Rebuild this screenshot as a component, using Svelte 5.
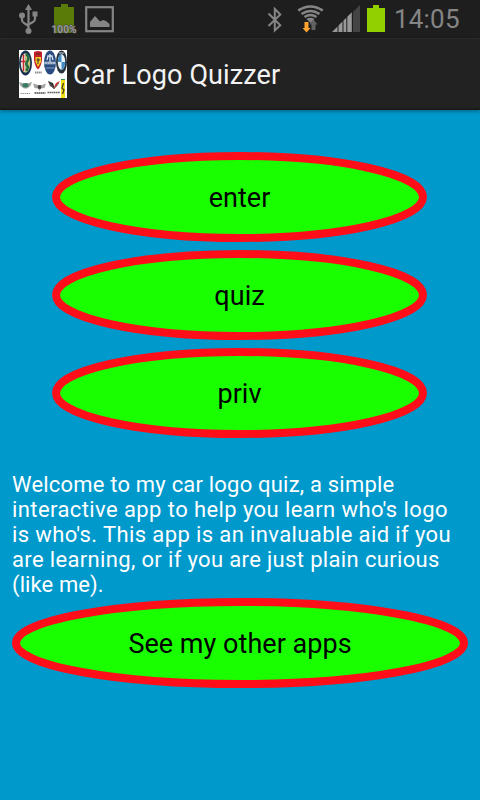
<script>
    const menu = ["enter", "quiz", "priv"];
    const lines = [
        {text: "Welcome to my car logo quiz, a simple", spacing: 0.2},
        {text: "interactive app to help you learn who's logo", spacing: 0.41},
        {text: "is who's. This app is an invaluable aid if you", spacing: 0.39},
        {text: "are learning, or if you are just plain curious", spacing: 0.35},
        {text: "(like me).", spacing: 0.1}
    ];
</script>

{#snippet oval(label)}
    <button>
        <svg class="ring"><ellipse cx="50%" cy="50%" /></svg>
        <span>{label}</span>
    </button>
{/snippet}

<div class="screen">
    <div class="statusBar">
        <svg class="notifications" width="130" height="38" viewBox="0 0 130 38">
            <!-- usb -->
            <g fill="none" stroke="#858585" stroke-width="2.2">
                <path d="M28.500 9V30M22 16V20Q22 22 24 23L28.500 26M35 15V19Q35 21 33 22L28.500 24.500" />
            </g>
            <g fill="#858585">
                <path d="M28.500 4L32 10H25Z" />
                <circle cx="22" cy="15.500" r="3" />
                <rect x="32.500" y="11.500" width="5" height="5" />
                <circle cx="28.500" cy="31" r="3" />
            </g>
            <!-- charge level -->
            <path d="M61 4H68V7H74V33H54V7H61Z" fill="#5b7b08" />
            <text x="64" y="33" text-anchor="middle" textLength="25" lengthAdjust="spacingAndGlyphs" class="level">100%</text>
            <!-- picture -->
            <rect x="86.200" y="7.200" width="26.600" height="24" fill="none" stroke="#858585" stroke-width="2.200" />
            <path d="M90 27V22L95 16L100 21.500L103 20L106 21L109.500 24V27Z" fill="#858585" />
        </svg>
        <svg class="system" width="136" height="38" viewBox="256 0 136 38">
            <path d="M268.500 13.500L280.300 25.200L274.800 30.500V9L280.300 14.500L268.500 26" fill="none" stroke="#858585" stroke-width="2" />
            <!-- wifi -->
            <g fill="none" stroke="#858585" stroke-width="2.700">
                <path d="M298.300 10.500Q310.500 2.500 322.700 10.500" />
                <path d="M301.500 14Q310.500 8 319.500 14" />
                <path d="M304.500 17Q310.500 13 316.500 17" />
            </g>
            <path d="M306.500 19Q310.500 16.500 314.500 19L310.500 23Z" fill="#858585" />
            <path d="M304.500 22H308.500V28H310.500L306.500 32.500L302.500 28H304.500Z" fill="#ffa431" />
            <path d="M311.500 30H315.500V24.500H317.500L313.500 19.500L309.500 24.500H311.500Z" fill="#626262" />
            <!-- signal -->
            <path d="M360 5V32H353V12Z" fill="#444" />
            <path d="M332 32L337.500 26.500V32ZM338.500 25.500L342.500 21.500V32H338.500ZM343.500 20.500L346.300 17.700V32H343.500ZM347.300 16.700L351.800 12.200V32H347.300Z" fill="#999" />
            <path d="M373 5H379V8H385V32H367V8H373Z" fill="#92d000" />
        </svg>
        <span class="clock">14:05</span>
    </div>

    <div class="actionBar">
        <svg class="appIcon" width="48" height="48" viewBox="0 0 48 48">
            <rect width="48" height="48" fill="#fff" />
            <!-- green and red cross roundel -->
            <ellipse cx="6.500" cy="13" rx="6.500" ry="12.500" fill="#152e51" />
            <ellipse cx="6.500" cy="13" rx="4.800" ry="9.800" fill="#c5bd79" />
            <path d="M6 3.500V22Q2 20 2 13T6 3.500Z" fill="#e6ecef" />
            <path d="M4.500 4.500V21M2 11.500H6.500" stroke="#c52830" stroke-width="1.500" />
            <path d="M7 4Q11 7 8.500 11Q6 14 9 17L7.500 21" fill="none" stroke="#236e43" stroke-width="2.500" />
            <!-- scorpion shield -->
            <path d="M15 2Q19 0 23 2V10Q22 17 19 19.500Q16 17 15 10Z" fill="#c8202b" />
            <path d="M16.500 7H22V12L19 17L16.500 12Z" fill="#f3ce25" />
            <path d="M17 4H21.500M19 8V14M17.500 10H21" stroke="#442d29" />
            <path d="M16 22.500H23" stroke="#888" stroke-width="2" stroke-dasharray="1.300 .5" />
            <!-- trident oval -->
            <ellipse cx="31" cy="12.500" rx="6" ry="12" fill="#294b82" />
            <path d="M28 10L29 6H33L34 10M31 4V12" fill="none" stroke="#d8e3ef" stroke-width="1.300" />
            <path d="M25.500 13H36.500" stroke="#d1dae5" stroke-width="2.500" />
            <path d="M26.500 13H35.500" stroke="#466691" stroke-dasharray="1 .6" />
            <path d="M26.500 18H35.500" stroke="#8ca3c2" />
            <!-- quartered roundel -->
            <ellipse cx="42.500" cy="12" rx="5.500" ry="11.500" fill="#26323e" />
            <ellipse cx="42.500" cy="12" rx="3.700" ry="7.800" fill="#eef5fa" />
            <path d="M42.500 4.200Q39 5 38.800 12H42.500ZM42.500 12H46.200Q46 18.500 42.500 19.800Z" fill="#418dc8" />
            <path d="M40 3L45 3" stroke="#c4ced5" />
            <!-- winged badges -->
            <path d="M0 32L5 33.500H8L13 32L11.500 36L8 38.500H5L1.500 36Z" fill="#a2a6a3" />
            <ellipse cx="6.500" cy="35.200" rx="3" ry="2.200" fill="#387960" />
            <path d="M1.500 43.500H11.500" stroke="#999" stroke-dasharray="1.500 .5" />
            <path d="M14 33.500L19 35H23L27 33.500L25.500 38L22 38.500L20.500 41L19 38.500L15.500 38Z" fill="#a5a5a5" />
            <circle cx="20.500" cy="37" r="1.900" fill="#3f3f3f" />
            <path d="M15.500 43H26.500" stroke="#777" stroke-width="2" stroke-dasharray="1.600 .4" />
            <!-- crossed flags -->
            <path d="M29 31L34 33L36 39L31 36Z" fill="#303030" />
            <path d="M41 31L37 33L34 39L38 36Z" fill="#ce3431" />
            <path d="M30 33L35 39L40 33" fill="none" stroke="#777" />
            <path d="M28.500 42.500H41" stroke="#666" stroke-width="1.500" stroke-dasharray="1.700 .4" />
            <rect x="42" y="29" width="4" height="19" fill="#f3df18" />
            <path d="M42 29.500H46" stroke="#329048" />
            <path d="M44.500 33L43 38L45 40L43.500 44" fill="none" stroke="#45411b" stroke-width="1.300" />
        </svg>
        <h1>Car Logo Quizzer</h1>
    </div>

    <main>
        <div class="menu">
            {#each menu as item}
                {@render oval(item)}
            {/each}
        </div>
        <p>
            {#each lines as line}
                <span style="letter-spacing: {line.spacing}px">{line.text}</span>
            {/each}
        </p>
        {@render oval("See my other apps")}
    </main>
</div>

<style>
:global(body){
    margin: 0;
    background: #0099cc;
}
.screen{
    width: 480px;
    height: 800px;
    overflow: hidden;
    background: #0099cc;
    font-family: Roboto, "Liberation Sans", sans-serif;
}
.statusBar{
    display: flex;
    box-sizing: border-box;
    height: 39px;
    background: #1e1e1e;
    border-bottom: 1px solid #302f2f;
}
.system{
    margin-left: 126px;
}
.level{
    font-size: 10px;
    font-weight: 700;
    fill: #999;
    stroke: #444;
    stroke-width: 1px;
    paint-order: stroke;
}
.clock{
    margin-left: 2px;
    font-size: 26px;
    line-height: 38px;
    letter-spacing: .2px;
    color: #858585;
}
.actionBar{
    display: flex;
    align-items: center;
    box-sizing: border-box;
    height: 71px;
    padding: 0 19px;
    background: #222;
    border-bottom: 2px solid #1b1b1b;
    box-shadow: 0 1px 4px rgba(0,0,0,.4);
}
.appIcon{
    margin-top: 1px;
}
h1{
    margin: 2px 0 0 6px;
    font-size: 27px;
    font-weight: 400;
    letter-spacing: .12px;
    color: #f3f3f3;
}
main{
    padding: 42px 12px 0;
}
.menu{
    display: flex;
    flex-direction: column;
    gap: 8px;
    margin: 0 41px 0 40px;
}
button{
    display: grid;
    place-items: center;
    width: 100%;
    height: 90px;
    padding: 0;
    border: 0;
    background: none;
    font-family: inherit;
    font-size: 27px;
    letter-spacing: .03px;
    color: #000;
}
.ring, button span{
    grid-area: 1 / 1;
}
button span{
    padding-top: 2px;
}
.ring{
    width: 100%;
    height: 90px;
}
.ring ellipse{
    rx: calc(50% - 4px);
    ry: calc(50% - 4px);
    fill: #19ff00;
    stroke: #ff0d19;
    stroke-width: 8px;
}
p{
    margin: 34px 0 1px;
    font-size: 22px;
    line-height: 25px;
    color: #fff;
}
p span{
    display: block;
    white-space: nowrap;
}
</style>
